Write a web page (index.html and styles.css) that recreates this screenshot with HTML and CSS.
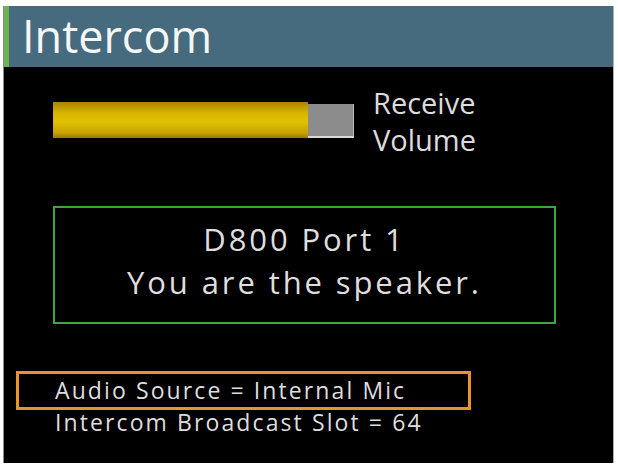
FILE: index.html
```html
<!DOCTYPE html>
<html lang="en">
<head>
<meta charset="utf-8">
<title>Intercom</title>
<link rel="stylesheet" href="styles.css">
</head>
<body>
<div class="screen">
  <header class="title-bar">
    <h1 class="title">Intercom</h1>
  </header>

  <section class="volume-row">
    <div class="volume-track">
      <div class="volume-fill" style="width: 85%"></div>
    </div>
    <div class="volume-label">Receive<br>Volume</div>
  </section>

  <section class="status-box">
    <p class="status-line">D800 Port 1</p>
    <p class="status-line">You are the speaker.</p>
  </section>

  <ul class="settings">
    <li class="setting selected">Audio Source = Internal Mic</li>
    <li class="setting">Intercom Broadcast Slot = 64</li>
  </ul>
</div>
</body>
</html>
```

FILE: styles.css
```css
html, body {
  margin: 0;
  padding: 0;
  background: #ffffff;
}

body {
  font-family: "Open Sans", "DejaVu Sans", sans-serif;
}

/* black display panel */
.screen {
  margin: 6px 0 0 4px;
  width: 609px;
  height: 457px;
  background: #000000;
  box-shadow: -1px 0 0 #8a8a8a, 1px 0 0 #b0b0b0, 0 1px 0 #b0b0b0;
  display: flex;
  flex-direction: column;
  overflow: hidden;
}

.title-bar {
  height: 61px;
  background: #466a7e;
  border-left: 5px solid #6db34f;
  padding-left: 13px;
  display: flex;
  align-items: center;
}

.title {
  margin: 0;
  font-weight: 400;
  font-size: 45px;
  color: #f6f6f6;
  line-height: 1;
  padding-bottom: 3px;
}

/* receive volume slider */
.volume-row {
  display: flex;
  align-items: center;
  gap: 19px;
  margin: 17px 0 0 49px;
}

.volume-track {
  width: 300px;
  height: 32px;
  background: #8c8c8c;
  border-bottom: 2px solid #d8d8d8;
  border-right: 1px solid #bdbdbd;
  display: flex;
}

.volume-fill {
  height: 36px;
  margin-top: -2px;
  background: linear-gradient(#a98400 0%, #d7b400 30%, #e0c200 55%, #c9a300 85%, #9c7a00 100%);
}

.volume-label {
  font-size: 29px;
  line-height: 37px;
  color: #dcdcdc;
}

/* connection status */
.status-box {
  margin: 48px 0 0 49px;
  width: 499px;
  height: 106px;
  padding-bottom: 8px;
  border: 2px solid #3fa63f;
  display: flex;
  flex-direction: column;
  justify-content: center;
  align-items: center;
}

.status-line {
  margin: 0;
  font-size: 31px;
  line-height: 43px;
  letter-spacing: 2.9px;
  color: #dedede;
}

/* settings list, focused item outlined */
.settings {
  list-style: none;
  margin: 47px 0 0 12px;
  padding: 0;
}

.setting {
  font-size: 23px;
  line-height: 33px;
  letter-spacing: 2.1px;
  color: #dedede;
  padding-left: 36px;
  width: 413px;
  border: 3px solid transparent;
}

.setting + .setting {
  margin-top: -7px;
}

.setting.selected {
  border-color: #e9932c;
}
```
